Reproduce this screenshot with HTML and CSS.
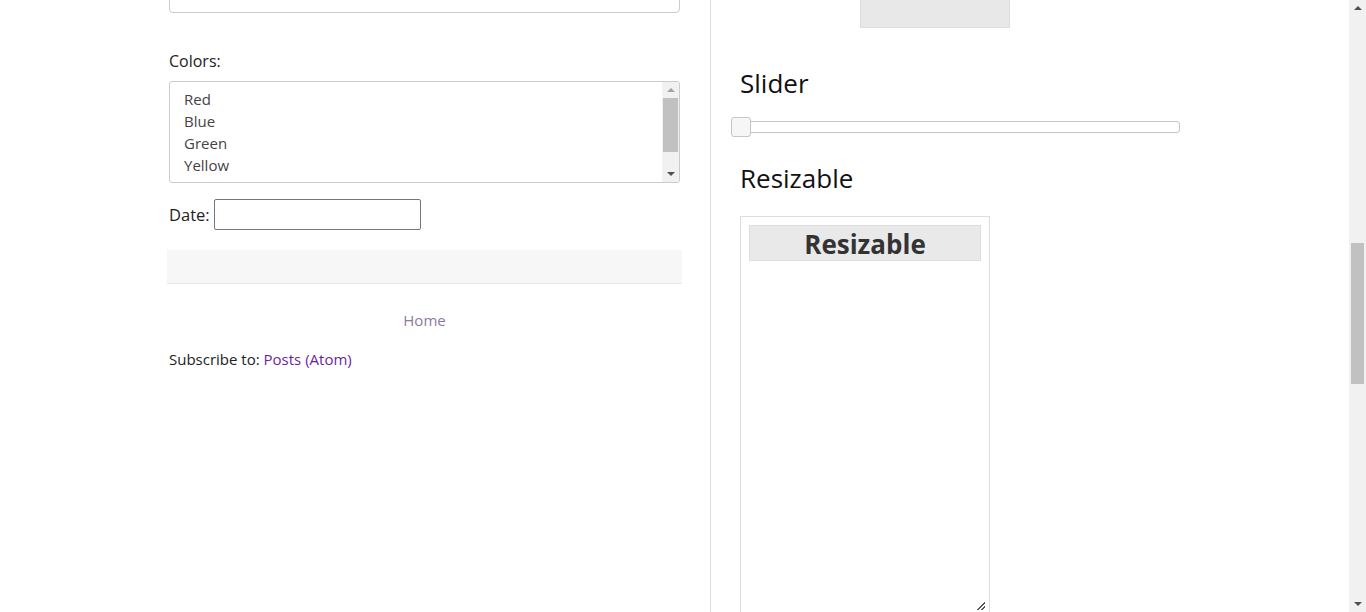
FILE: index.html
```html
<!DOCTYPE html>
<html lang="en">
<head>
<meta charset="utf-8">
<title>Widgets</title>
<link rel="stylesheet" href="styles.css">
</head>
<body>
<div class="viewport">
  <div class="page">
    <div class="left">
      <div class="form-block">
        <input class="text-input" type="text">
        <div class="label">Colors:</div>
        <div class="listbox">
          <ul class="options">
            <li>Red</li>
            <li>Blue</li>
            <li>Green</li>
            <li>Yellow</li>
            <li>White</li>
          </ul>
          <div class="lb-scroll">
            <span class="arr up"></span>
            <div class="lb-track"><div class="lb-thumb"></div></div>
            <span class="arr down"></span>
          </div>
        </div>
        <div class="date-row">
          <span>Date:</span>
          <input class="date-input" type="text">
        </div>
      </div>
      <div class="gray-bar"></div>
      <div class="home"><a href="#">Home</a></div>
      <div class="subscribe">Subscribe to: <a href="#">Posts (Atom)</a></div>
    </div>
    <div class="right">
      <div class="top-box"></div>
      <h2 class="heading slider-h">Slider</h2>
      <div class="slider">
        <span class="handle"></span>
      </div>
      <h2 class="heading resize-h">Resizable</h2>
      <div class="resizable">
        <h3 class="rs-header">Resizable</h3>
        <span class="grip"></span>
      </div>
    </div>
  </div>
  <div class="vscroll">
    <span class="sarr up"></span>
    <div class="strack"><div class="sthumb"></div></div>
    <span class="sarr down"></span>
  </div>
</div>
</body>
</html>
```

FILE: styles.css
```css
* { box-sizing: border-box; }
html, body { margin: 0; padding: 0; height: 612px; overflow: hidden; background: #fff; }
body { font-family: "Open Sans", "Noto Sans", sans-serif; font-size: 15px; color: #222; }

.viewport { display: flex; height: 612px; }
.page { flex: 1; display: flex; padding-left: 167px; overflow: hidden; }

.left { width: 515px; flex: none; }
.form-block { padding: 0 2px; }
.text-input {
  display: block; width: 511px; height: 34px; margin-top: -21px;
  border: 1px solid #ccc; border-radius: 4px; background: #fff;
}
.label { margin-top: 37px; line-height: 22px; font-size: 16px; color: #222; }
.listbox {
  margin-top: 9px; height: 102px; border: 1px solid #ccc; border-radius: 3px;
  display: flex; overflow: hidden;
}
.options { flex: 1; list-style: none; margin: 0; padding: 6px 0 0 14px; color: #444; }
.options li { line-height: 22px; height: 22px; }
.lb-scroll { width: 17px; background: #f1f1f1; display: flex; flex-direction: column; align-items: center; }
.lb-track { flex: 1; width: 100%; padding: 0 1px; }
.lb-thumb { margin-top: 0; height: 54px; background: #c1c1c1; }
.arr { width: 0; height: 0; border-left: 4px solid transparent; border-right: 4px solid transparent; margin: 6px 0; }
.arr.up { border-bottom: 4px solid #a3a3a3; }
.arr.down { border-top: 4px solid #505050; }

.date-row { margin-top: 16px; display: flex; align-items: center; gap: 4px; font-size: 16.5px; color: #222; }
.date-input { width: 207px; height: 31px; border: 1px solid #767676; border-radius: 2px; background: #fff; }

.gray-bar { margin-top: 20px; height: 34px; background: #f7f7f7; border-bottom: 1px solid #e8e8e8; }
.home { margin-top: 25px; text-align: center; line-height: 22px; }
.home a { color: #8e7a9e; text-decoration: none; }
.subscribe { margin-top: 17px; padding-left: 2px; line-height: 22px; color: #222; }
.subscribe a { color: #6b1fa0; text-decoration: none; }

.right { margin-left: 28px; border-left: 1px solid #ddd; padding-left: 20px; width: 460px; flex: none; }
.top-box { margin-left: 129px; margin-top: -5px; width: 150px; height: 33px; background: #e8e8e8; border: 1px solid #ddd; }
.heading { margin: 0; font-weight: normal; font-size: 26px; line-height: 30px; color: #111; padding-left: 9px; }
.slider-h { margin-top: 40px; }
.slider { position: relative; margin: 23px 0 0 10px; width: 439px; height: 12px; border: 1px solid #c5c5c5; border-radius: 3px; background: #fff; }
.handle { position: absolute; left: -11px; top: -5px; width: 20px; height: 20px; background: #f6f6f6; border: 1px solid #c5c5c5; border-radius: 3px; }
.resize-h { margin-top: 30px; }
.resizable { position: relative; margin: 23px 0 0 9px; width: 250px; height: 420px; border: 1px solid #ddd; padding: 8px; }
.rs-header { margin: 0; height: 36px; line-height: 36px; background: #e9e9e9; border: 1px solid #ddd; text-align: center; font-size: 26px; font-weight: bold; color: #333; }
.grip {
  position: absolute; right: 4px; top: 385px; width: 8px; height: 8px;
  background: linear-gradient(135deg, transparent 50%, #555 50%, #555 60%, transparent 60%, transparent 75%, #555 75%, #555 85%, transparent 85%);
}

.vscroll { width: 17px; flex: none; background: #f1f1f1; display: flex; flex-direction: column; align-items: center; }
.strack { flex: 1; width: 100%; padding: 0 2px; }
.sthumb { margin-top: 227px; height: 141px; background: #c1c1c1; }
.sarr { width: 0; height: 0; border-left: 4px solid transparent; border-right: 4px solid transparent; margin: 6px 0; }
.sarr.up { border-bottom: 4px solid #505050; }
.sarr.down { border-top: 4px solid #505050; }
```
